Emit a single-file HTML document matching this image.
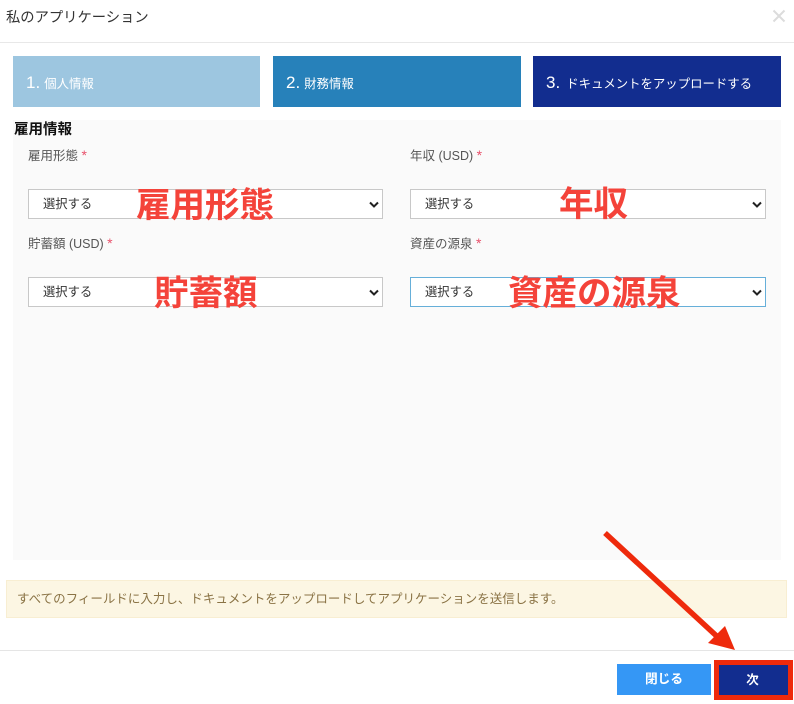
<!DOCTYPE html>
<html lang="ja"><head><meta charset="utf-8"><style>
*{box-sizing:border-box}
html,body{margin:0;padding:0;background:#fff}
body{width:794px;height:704px;position:relative;overflow:hidden;font-family:"Liberation Sans","Noto Sans CJK JP",sans-serif;color:#333}
.a{position:absolute;white-space:nowrap}
.step{top:56px;height:51px;color:#fff;font-size:12.4px;line-height:53px;padding-left:13px}
.step b{font-weight:400;font-size:17px;margin-right:4px}
.lab{font-size:12.5px;color:#555;line-height:16px}
.lab i{font-style:normal;color:#e8506a;font-size:14px}
.sel{height:30px;background:#fff;border:1px solid #c8c8c8;font-size:12.3px;line-height:29px;padding-left:14px;color:#333}
.sel svg{position:absolute;right:2px;top:10px}
.ann{color:#f4433a;font-weight:700;font-size:34.5px;line-height:40px}
</style></head><body>
<div class="a" style="left:6px;top:9px;font-size:14.3px;line-height:18px;color:#333">私のアプリケーション</div>
<svg class="a" style="left:772px;top:9px" width="14" height="14" viewBox="0 0 14 14"><path d="M1.5 1.5L12.5 12.5M12.5 1.5L1.5 12.5" stroke="#dcdcdc" stroke-width="2" fill="none"/></svg>
<div class="a" style="left:0;top:42px;width:794px;height:1px;background:#e8e8e8"></div>

<div class="a step" style="left:13px;width:247px;background:#9dc6e0"><b>1.</b>個人情報</div>
<div class="a step" style="left:273px;width:248px;background:#2781ba"><b>2.</b>財務情報</div>
<div class="a step" style="left:533px;width:248px;background:#122d8f"><b style="margin-right:6px">3.</b>ドキュメントをアップロードする</div>

<div class="a" style="left:13px;top:120px;width:768px;height:440px;background:#fafafa"></div>
<div class="a" style="left:14px;top:121px;font-size:14.5px;font-weight:700;line-height:18px;color:#111">雇用情報</div>

<div class="a lab" style="left:28px;top:147px">雇用形態 <i>*</i></div>
<div class="a lab" style="left:410px;top:147px">年収 (USD) <i>*</i></div>
<div class="a sel" style="left:28px;top:189px;width:355px">選択する<svg width="12" height="10" viewBox="0 0 12 10"><path d="M2 2.5L6 6.5L10 2.5" stroke="#222" stroke-width="2" fill="none"/></svg></div>
<div class="a sel" style="left:410px;top:189px;width:356px">選択する<svg width="12" height="10" viewBox="0 0 12 10"><path d="M2 2.5L6 6.5L10 2.5" stroke="#222" stroke-width="2" fill="none"/></svg></div>

<div class="a lab" style="left:28px;top:235px">貯蓄額 (USD) <i>*</i></div>
<div class="a lab" style="left:410px;top:235px">資産の源泉 <i>*</i></div>
<div class="a sel" style="left:28px;top:277px;width:355px">選択する<svg width="12" height="10" viewBox="0 0 12 10"><path d="M2 2.5L6 6.5L10 2.5" stroke="#222" stroke-width="2" fill="none"/></svg></div>
<div class="a sel" style="left:410px;top:277px;width:356px;border-color:#66afd9">選択する<svg width="12" height="10" viewBox="0 0 12 10"><path d="M2 2.5L6 6.5L10 2.5" stroke="#222" stroke-width="2" fill="none"/></svg></div>

<div class="a ann" style="left:136px;top:186px">雇用形態</div>
<div class="a ann" style="left:559px;top:185px">年収</div>
<div class="a ann" style="left:154px;top:274px">貯蓄額</div>
<div class="a ann" style="left:508px;top:274px">資産の源泉</div>

<div class="a" style="left:6px;top:580px;width:781px;height:38px;background:#fcf6e3;border:1px solid #f8eed2;color:#8a7345;font-size:12.5px;line-height:36px;padding-left:10px">すべてのフィールドに入力し、ドキュメントをアップロードしてアプリケーションを送信します。</div>
<div class="a" style="left:0;top:650px;width:794px;height:1px;background:#e5e5e5"></div>

<div class="a" style="left:617px;top:664px;width:94px;height:31px;background:#3597f5;color:#fff;font-size:12.7px;font-weight:700;line-height:31px;text-align:center">閉じる</div>
<div class="a" style="left:714px;top:660px;width:79px;height:40px;background:#122d8f;border:5px solid #ee2a0c;color:#fff;font-size:12.5px;font-weight:700;line-height:30px;text-align:center;padding-right:2px">次</div>

<svg class="a" style="left:0;top:0" width="794" height="704" viewBox="0 0 794 704"><path d="M605 533L722 641" stroke="#ee2a0c" stroke-width="5.5" fill="none"/><path d="M725 626L735 650L708 643Z" fill="#ee2a0c"/></svg>
</body></html>
